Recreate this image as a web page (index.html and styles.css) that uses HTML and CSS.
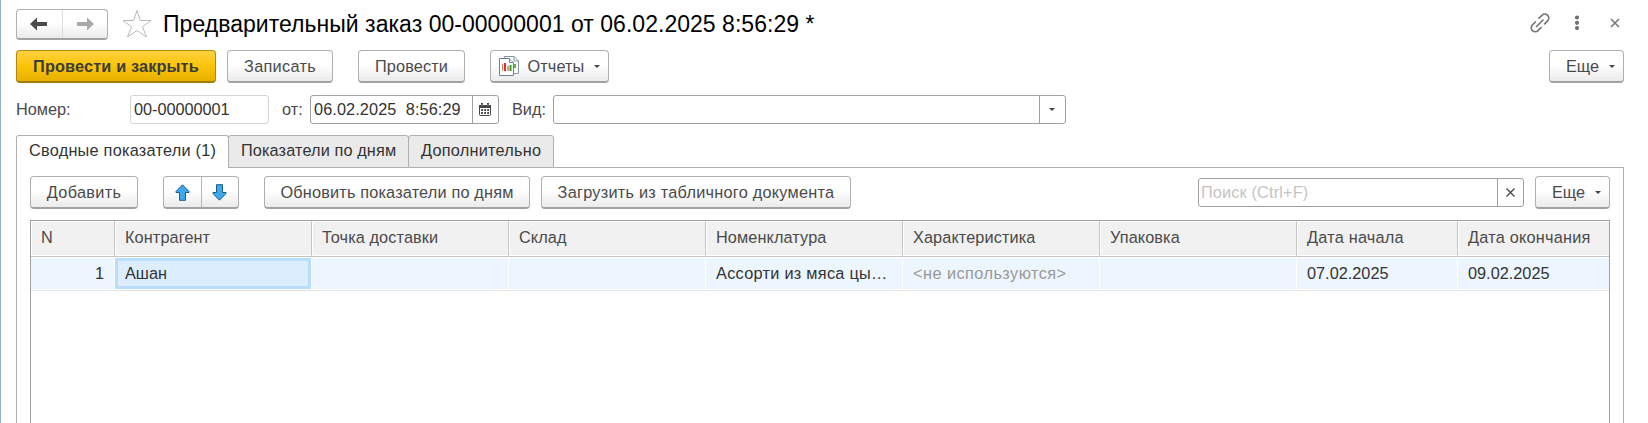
FILE: index.html
```html
<!DOCTYPE html>
<html lang="ru">
<head>
<meta charset="utf-8">
<title>Предварительный заказ</title>
<link rel="stylesheet" href="styles.css">
</head>
<body>
<main class="window">
  <header class="titlebar">
    <div class="btn-group nav">
      <button class="seg" aria-label="Назад"><svg width="18" height="14" viewBox="0 0 18 14"><path d="M0 7 7 0.5V5H17V9H7V13.500Z" fill="#4a4a4a"/></svg></button>
      <button class="seg" aria-label="Вперед"><svg width="18" height="14" viewBox="0 0 18 14"><path d="M18 7 11 0.500V5H1V9H11V13.500Z" fill="#a9a9a9"/></svg></button>
    </div>
    <svg class="star" width="30" height="30" viewBox="0 0 30 30"><path d="M15 1.500 18.300 11.500H29L20.500 17.800 24.500 28 15 21.500 5.500 28 9.500 17.800 1 11.500H11.700Z" fill="#fff" stroke="#b4bbc2" stroke-width="1"/></svg>
    <h1 class="title">Предварительный заказ 00-00000001 от 06.02.2025 8:56:29 *</h1>
    <div class="window-tools">
      <svg width="20" height="20" viewBox="0 0 20 20" fill="none" stroke="#777" stroke-width="1.700" stroke-linecap="round"><path d="M6.500 13.500 13 7M9 5.200 12 2.300a3.900 3.900 0 0 1 5.600 5.600l-3 3M5.300 9 2.400 12a3.900 3.900 0 0 0 5.600 5.600l3-3"/></svg>
      <svg width="6" height="16" viewBox="0 0 6 16" fill="#6e6e6e"><circle cx="3" cy="2.500" r="2.100"/><circle cx="3" cy="7.800" r="2.100"/><circle cx="3" cy="13.100" r="2.100"/></svg>
      <svg width="10" height="10" viewBox="0 0 10 10" stroke="#777" stroke-width="1.600"><path d="M1 1 9 9M9 1 1 9"/></svg>
    </div>
  </header>

  <div class="commands">
    <button class="btn primary post-close"><span>Провести и закрыть</span></button>
    <button class="btn save"><span>Записать</span></button>
    <button class="btn post"><span>Провести</span></button>
    <button class="btn reports">
      <svg class="report-icon" width="20" height="20" viewBox="0 0 20 20"><path d="M5.500.5H15L19.500 5V17.500H5.500Z" fill="#fff" stroke="#8496a5"/><path d="M15 .5V5H19.500" fill="none" stroke="#8496a5"/><path d="M16 8V12" stroke="#54b948" stroke-width="2"/><path d="M.5 2.500H10.500L14.500 6.500V19.500H.5Z" fill="#fff" stroke="#6f8496"/><path d="M10.500 2.500V6.500H14.500" fill="#e4eaf0" stroke="#6f8496"/><path d="M3.500 8V15" stroke="#b98b72" stroke-width="1"/><path d="M6 7V15" stroke="#ed2a24" stroke-width="2"/><path d="M9 10V15" stroke="#e79a7c" stroke-width="2"/><path d="M11.500 9V15" stroke="#27a52c" stroke-width="2"/></svg>
      <span>Отчеты</span><i class="caret"></i>
    </button>
    <button class="btn more"><span>Еще</span><i class="caret"></i></button>
  </div>

  <div class="fields">
    <label class="label number-label">Номер:</label>
    <div class="input number">00-00000001</div>
    <label class="label from-label">от:</label>
    <div class="input date"><span class="value">06.02.2025&nbsp; 8:56:29</span><span class="input-btn"><svg width="12" height="13" viewBox="0 0 12 13"><rect x=".5" y="2.500" width="11" height="10" rx="1" fill="#fff" stroke="#444"/><path d="M0 2H12V5H0Z" fill="#444"/><path d="M3 0V3M9 0V3" stroke="#444" stroke-width="2"/><path d="M3 1V3M9 1V3" stroke="#ccc" stroke-width=".6"/><path d="M2.200 7H4M5.200 7H7M8.200 7H10M2.200 10H4M5.200 10H7M8.200 10H10" stroke="#444" stroke-width="1.800"/></svg></span></div>
    <label class="label kind-label">Вид:</label>
    <div class="input kind"><span class="value"></span><span class="input-btn"><i class="caret"></i></span></div>
  </div>

  <nav class="tabs">
    <div class="tab active"><span>Сводные показатели (1)</span></div>
    <div class="tab days"><span>Показатели по дням</span></div>
    <div class="tab extra"><span>Дополнительно</span></div>
    <div class="tab-line"></div>
  </nav>

  <section class="panel">
    <div class="toolbar">
      <button class="btn add"><span>Добавить</span></button>
      <div class="btn-group move">
        <button class="seg" aria-label="Вверх"><svg width="15" height="17" viewBox="0 0 15 17"><path d="M7.500.8 14 7.500V8.500H10.500V16.300H4.500V8.500H1V7.500Z" fill="#3fa9ee" stroke="#175a8c"/></svg></button>
        <button class="seg" aria-label="Вниз"><svg width="15" height="17" viewBox="0 0 15 17"><path d="M7.500 16.200 14 9.500V8.500H10.500V.7H4.500V8.500H1V9.500Z" fill="#3fa9ee" stroke="#175a8c"/></svg></button>
      </div>
      <button class="btn refresh"><span>Обновить показатели по дням</span></button>
      <button class="btn load"><span>Загрузить из табличного документа</span></button>
      <div class="input search"><span class="value">Поиск (Ctrl+F)</span><span class="input-btn"><svg width="9" height="9" viewBox="0 0 9 9" stroke="#444" stroke-width="1.200"><path d="M.5.5 8.500 8.500M8.500.5.5 8.500"/></svg></span></div>
      <button class="btn more"><span>Еще</span><i class="caret"></i></button>
    </div>

    <div class="table">
      <div class="row head">
        <div class="cell"><span>N</span></div>
        <div class="cell"><span>Контрагент</span></div>
        <div class="cell"><span>Точка доставки</span></div>
        <div class="cell"><span>Склад</span></div>
        <div class="cell"><span>Номенклатура</span></div>
        <div class="cell"><span>Характеристика</span></div>
        <div class="cell"><span>Упаковка</span></div>
        <div class="cell date-head"><span>Дата начала</span></div>
        <div class="cell date-head"><span>Дата окончания</span></div>
      </div>
      <div class="row body">
        <div class="cell num"><span>1</span></div>
        <div class="cell selected"><span>Ашан</span></div>
        <div class="cell"></div>
        <div class="cell"></div>
        <div class="cell item"><span>Ассорти из мяса цы…</span></div>
        <div class="cell muted"><span>&lt;не используются&gt;</span></div>
        <div class="cell"></div>
        <div class="cell"><span>07.02.2025</span></div>
        <div class="cell"><span>09.02.2025</span></div>
      </div>
    </div>
  </section>
</main>
</body>
</html>
```
FILE: styles.css
```css
* { box-sizing: border-box; }
body { margin: 0; background: #fff; overflow: hidden; }
.window {
  height: 423px; padding: 9px 24px 0 15px; border-left: 1px solid #8fadcb;
  display: flex; flex-direction: column;
  font: 16.300px/20px "Liberation Sans", Arial, sans-serif; color: #4a4a4a;
}
svg { display: block; flex: none; }
button { font: inherit; color: inherit; padding: 0; margin: 0; }

.titlebar { display: flex; height: 31px; align-items: flex-start; }
.btn-group, .btn {
  border: 1px solid #b0b0b0; border-bottom: 2px solid #a2a2a2; border-radius: 4px;
  background: linear-gradient(#fff 0%, #fff 45%, #ebebeb 100%);
}
.btn-group { display: flex; }
.seg { flex: 1; border: 0; background: none; display: flex; align-items: center; justify-content: center; }
.seg + .seg { border-left: 1px solid #b8b8b8; }
.nav { width: 92px; height: 31px; }
.nav .seg + .seg { border-color: #ddd; }
.star { margin-left: 14px; }
.title { margin: 0 0 0 11px; font-size: 23px; line-height: 30px; font-weight: 400; letter-spacing: .03px; color: #000; white-space: nowrap; }
.window-tools { margin-left: auto; display: flex; align-items: center; height: 28px; }
.window-tools svg:nth-child(2) { margin-left: 24px; }
.window-tools svg:nth-child(3) { margin: 0 4px 0 30px; }

.commands { display: flex; margin-top: 10px; height: 33px; }
.btn { height: 33px; display: flex; align-items: center; justify-content: center; white-space: nowrap; }
.primary {
  border-color: #b08a10; border-bottom-color: #a07c08; color: #3c3c3c; font-weight: 700;
  background: linear-gradient(#ffd13f 0%, #fbc40a 50%, #e8b000 100%);
}
.caret { flex: none; border: 3px solid transparent; border-top-color: #444; border-bottom: 0; }
.post-close { width: 200px; letter-spacing: .14px; }
.save { width: 106px; margin-left: 11px; letter-spacing: .3px; }
.post { width: 107px; margin-left: 25px; letter-spacing: .15px; }
.reports { width: 119px; margin-left: 25px; letter-spacing: .1px; }
.reports span { margin: 0 10px 0 9px; }
.more { width: 75px; padding-left: 8px; }
.more span { margin-right: 10px; }
.commands .more { margin-left: auto; }

.fields { display: flex; margin-top: 12px; height: 29px; align-items: center; }
.label { white-space: nowrap; padding-bottom: 2px; }
.number-label { width: 114px; }
.from-label { width: 41px; padding-left: 13px; }
.kind-label { width: 54px; padding-left: 13px; }
.input {
  height: 29px; border: 1px solid #a0a0a0; border-radius: 3px; background: #fff; color: #333;
  display: flex; align-items: center; white-space: nowrap; padding-left: 3px;
}
.value { flex: 1; padding-bottom: 2px; }
.input-btn { width: 26px; height: 27px; border-left: 1px solid #a0a0a0; display: flex; align-items: center; justify-content: center; padding-right: 1px; }
.number { width: 139px; border-color: #d4d4d4; padding-bottom: 2px; letter-spacing: -.05px; }
.date { width: 189px; letter-spacing: .1px; }
.kind { width: 513px; }

.tabs { display: flex; margin-top: 11px; height: 33px; }
.tab {
  height: 33px; border: 1px solid #b0b0b0; border-radius: 3px 3px 0 0; background: #eaeaea; color: #333;
  padding: 4px 0 0 12px; white-space: nowrap;
}
.tab.active { width: 213px; background: #fff; border-bottom: 0; letter-spacing: .24px; }
.tab.days { width: 181px; margin-left: -1px; letter-spacing: .12px; }
.tab.extra { width: 146px; margin-left: -1px; letter-spacing: .23px; }
.tab-line { flex: 1; border-bottom: 1px solid #b0b0b0; }

.panel {
  flex: 1; min-height: 0; padding: 8px 13px 0; border: solid #b0b0b0; border-width: 0 1px;
  display: flex; flex-direction: column;
}
.toolbar { display: flex; height: 33px; flex: none; }
.add { width: 108px; letter-spacing: .3px; }
.move { width: 76px; height: 33px; margin-left: 25px; }
.refresh { width: 266px; margin-left: 25px; letter-spacing: .17px; }
.load { width: 310px; margin-left: 11px; letter-spacing: .25px; }
.search { width: 326px; margin: 2px 11px 0 auto; color: #c4c4c4; padding-left: 2px; letter-spacing: .15px; }

.table { flex: 1; min-height: 0; margin-top: 11px; border: 1px solid #a0a0a0; border-bottom: 0; }
.row { display: grid; grid-template-columns: 84px repeat(6, 197px) 161px 1fr; }
.head { height: 36px; border-bottom: 1px solid #c4c4c4; letter-spacing: .1px; }
.cell { padding: 0 0 0 10px; display: flex; align-items: center; white-space: nowrap; overflow: hidden; }
.head .cell { background: #f1f1f1; border: 1px solid #fff; border-right: 1px solid #c4c4c4; padding: 0 0 4px 9px; }
.head .cell:last-child { border-right: 0; }
.head .date-head { letter-spacing: .23px; }
.body { height: 34px; border-bottom: 1px solid #e4e4e4; color: #333; }
.body .cell { background: #edf6fe; border: 1px solid #fff; border-left: 0; padding-bottom: 2px; }
.body .cell:last-child { border-right: 0; }
.body .num { justify-content: flex-end; padding-right: 10px; }
.body .selected { background: #dceefd; border: 0; margin: 1px 1px 1px 0; outline: 3px solid #b9defb; outline-offset: -3px; }
.body .item { letter-spacing: .28px; }
.body .muted { color: #999; letter-spacing: .45px; }
```
